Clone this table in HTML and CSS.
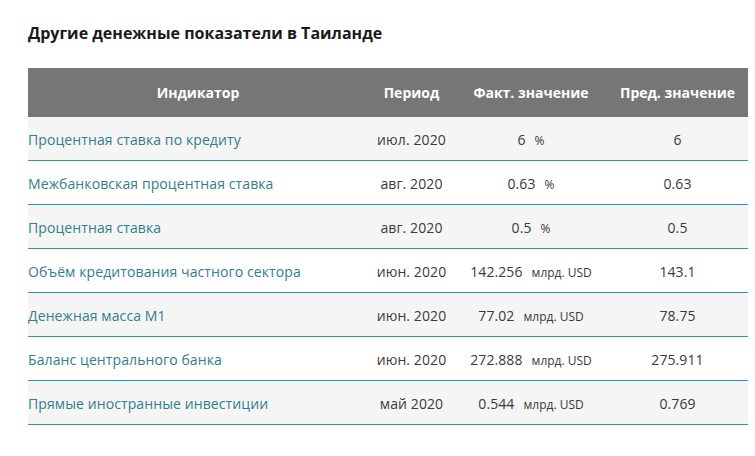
FILE: index.html
```html
<!DOCTYPE html>
<html lang="ru">
<head>
<meta charset="utf-8">
<link rel="stylesheet" href="styles.css">
</head>
<body>
<div class="page">
  <h2 class="title">Другие денежные показатели в Таиланде</h2>
  <table class="tbl">
    <colgroup>
      <col class="c1"><col class="c2"><col class="c3"><col class="c4">
    </colgroup>
    <thead>
      <tr><th>Индикатор</th><th>Период</th><th>Факт. значение</th><th>Пред. значение</th></tr>
    </thead>
    <tbody>
      <tr><td class="name"><a href="#">Процентная ставка по кредиту</a></td><td>июл. 2020</td><td><span class="num">6</span><span class="unit">%</span></td><td>6</td></tr>
      <tr><td class="name"><a href="#">Межбанковская процентная ставка</a></td><td>авг. 2020</td><td><span class="num">0.63</span><span class="unit">%</span></td><td>0.63</td></tr>
      <tr><td class="name"><a href="#">Процентная ставка</a></td><td>авг. 2020</td><td><span class="num">0.5</span><span class="unit">%</span></td><td>0.5</td></tr>
      <tr><td class="name"><a href="#">Объём кредитования частного сектора</a></td><td>июн. 2020</td><td><span class="num">142.256</span><span class="unit">млрд. USD</span></td><td>143.1</td></tr>
      <tr><td class="name"><a href="#">Денежная масса M1</a></td><td>июн. 2020</td><td><span class="num">77.02</span><span class="unit">млрд. USD</span></td><td>78.75</td></tr>
      <tr><td class="name"><a href="#">Баланс центрального банка</a></td><td>июн. 2020</td><td><span class="num">272.888</span><span class="unit">млрд. USD</span></td><td>275.911</td></tr>
      <tr><td class="name"><a href="#">Прямые иностранные инвестиции</a></td><td>май 2020</td><td><span class="num">0.544</span><span class="unit">млрд. USD</span></td><td>0.769</td></tr>
    </tbody>
  </table>
</div>
</body>
</html>
```
FILE: styles.css
```css
html, body {
  margin: 0;
  padding: 0;
  background: #fff;
}
body {
  font-family: "Open Sans", "Liberation Sans", sans-serif;
  color: #333;
}
.page {
  padding: 22px 7px 0 28px;
}
.title {
  margin: 0 0 24px 0;
  font-size: 16px;
  line-height: 22px;
  font-weight: 700;
  color: #1a1a1a;
}
.tbl {
  width: 720px;
  border-collapse: collapse;
  table-layout: fixed;
  font-size: 14px;
}
.c1 { width: 340px; }
.c2 { width: 87px; }
.c3 { width: 152px; }
.c4 { width: 141px; }
.tbl th {
  background: #767676;
  color: #fff;
  font-weight: 700;
  font-size: 14px;
  height: 49px;
  padding: 0;
  text-align: center;
}
.tbl td {
  height: 42px;
  padding: 1px 0 0 0;
  text-align: center;
  border-bottom: 1px solid #1e9cab;
  color: #3a3a3a;
  letter-spacing: 0.1px;
}
.tbl tbody tr:nth-child(odd) td {
  background: #f5f5f5;
}
.tbl td.name {
  text-align: left;
}
.tbl td.name a {
  color: #317e8c;
  text-decoration: none;
}
.num {
  margin-right: 9px;
}
.unit {
  font-size: 12px;
  letter-spacing: 0;
}
```
